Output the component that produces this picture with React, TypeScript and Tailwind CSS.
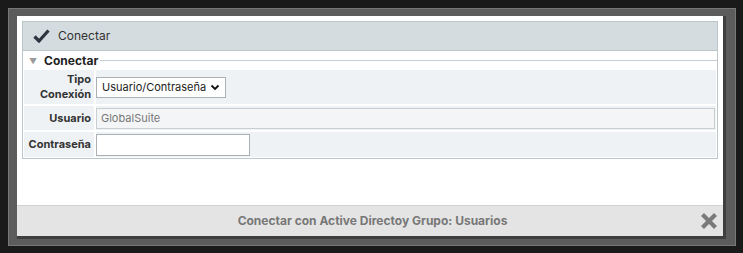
import React from "react";

const font = { fontFamily: "Inter, 'Open Sans', sans-serif" };

const App = () => {
  return (
    <div className="w-[743px] h-[253px] bg-[#1a1a1a] overflow-hidden pt-[8px] pl-[8px]" style={font}>
      {/* modal frame */}
      <div className="w-[728px] h-[238px] bg-[#5c5c5c] border border-[#777] pt-[7px] pl-[8px]">
        <div className="w-[709px] h-[223px] bg-white flex flex-col border-r-[3px] border-b-[3px] border-[#3e3e3e]">
          <div className="flex-1 px-[5px] pt-[5px]">
            {/* header */}
            <div className="h-[30px] bg-[#d4dcdf] border border-[#bcc7cc] flex items-center pl-[10px] gap-[8px]">
              <svg width="17" height="14" viewBox="0 0 17 14">
                <path d="M1.5 7.5 L6 12 L15.5 1.5" fill="none" stroke="#2b3440" strokeWidth="3.2" strokeLinejoin="miter" />
              </svg>
              <span className="text-[12px] text-[#333]">Conectar</span>
            </div>
            {/* fieldset */}
            <div className="border border-t-0 border-[#bcc7cc] pb-[1px]">
              <div className="h-[19px] flex items-center pl-[6px]">
                <span className="text-[8px] text-[#999] mr-[7px] leading-none">▼</span>
                <span className="text-[12px] font-bold text-[#222]">Conectar</span>
                <div className="flex-1 h-px bg-[#c5ced2] ml-[2px]" />
              </div>
              <div className="px-[1px] flex flex-col gap-[2px]">
                <div className="flex gap-[2px] h-[34px]">
                  <div className="w-[70px] bg-[#eff2f4] flex flex-col items-end justify-center pr-[3px] text-[11px] font-bold text-[#333] leading-[15px]">
                    <span>Tipo</span>
                    <span>Conexión</span>
                  </div>
                  <div className="flex-1 bg-[#eff2f4] flex items-center">
                    <div className="h-[21px] w-[130px] bg-white border border-[#aab0b4] flex items-center px-[5px] justify-between text-[11px] text-[#222]">
                      <span>Usuario/Contraseña</span>
                      <svg width="10" height="7" viewBox="0 0 10 7">
                        <path d="M1.5 1.5 L5 5 L8.5 1.5" fill="none" stroke="#111" strokeWidth="1.8" />
                      </svg>
                    </div>
                  </div>
                </div>
                <div className="flex gap-[2px] h-[24px]">
                  <div className="w-[70px] bg-[#eff2f4] flex items-center justify-end pr-[3px] text-[11px] font-bold text-[#333]">
                    Usuario
                  </div>
                  <div className="flex-1 bg-[#eff2f4] flex items-center pr-[1px]">
                    <div className="h-[21px] w-full bg-[#f3f5f6] border border-[#c9ced1] flex items-center px-[4px] text-[11px] text-[#777]">
                      GlobalSuite
                    </div>
                  </div>
                </div>
                <div className="flex gap-[2px] h-[25px]">
                  <div className="w-[70px] bg-[#eff2f4] flex items-center justify-end pr-[3px] text-[11px] font-bold text-[#333]">
                    Contraseña
                  </div>
                  <div className="flex-1 bg-[#eff2f4] flex items-center">
                    <div className="h-[22px] w-[154px] bg-white border border-[#aab0b4]" />
                  </div>
                </div>
              </div>
            </div>
          </div>
          {/* footer */}
          <div className="h-[31px] bg-[#e4e4e4] border-t border-[#d2d2d2] flex items-center relative">
            <span className="flex-1 text-center text-[12px] font-bold text-[#777] pl-[5px]">
              Conectar con Active Directoy Grupo: Usuarios
            </span>
            <svg className="absolute right-[5px] top-[6px]" width="18" height="18" viewBox="0 0 18 18">
              <path d="M2.5 2.5 L15.5 15.5 M15.5 2.5 L2.5 15.5" stroke="#7a7a7a" strokeWidth="4.2" />
            </svg>
          </div>
        </div>
      </div>
    </div>
  );
};

export default App;
